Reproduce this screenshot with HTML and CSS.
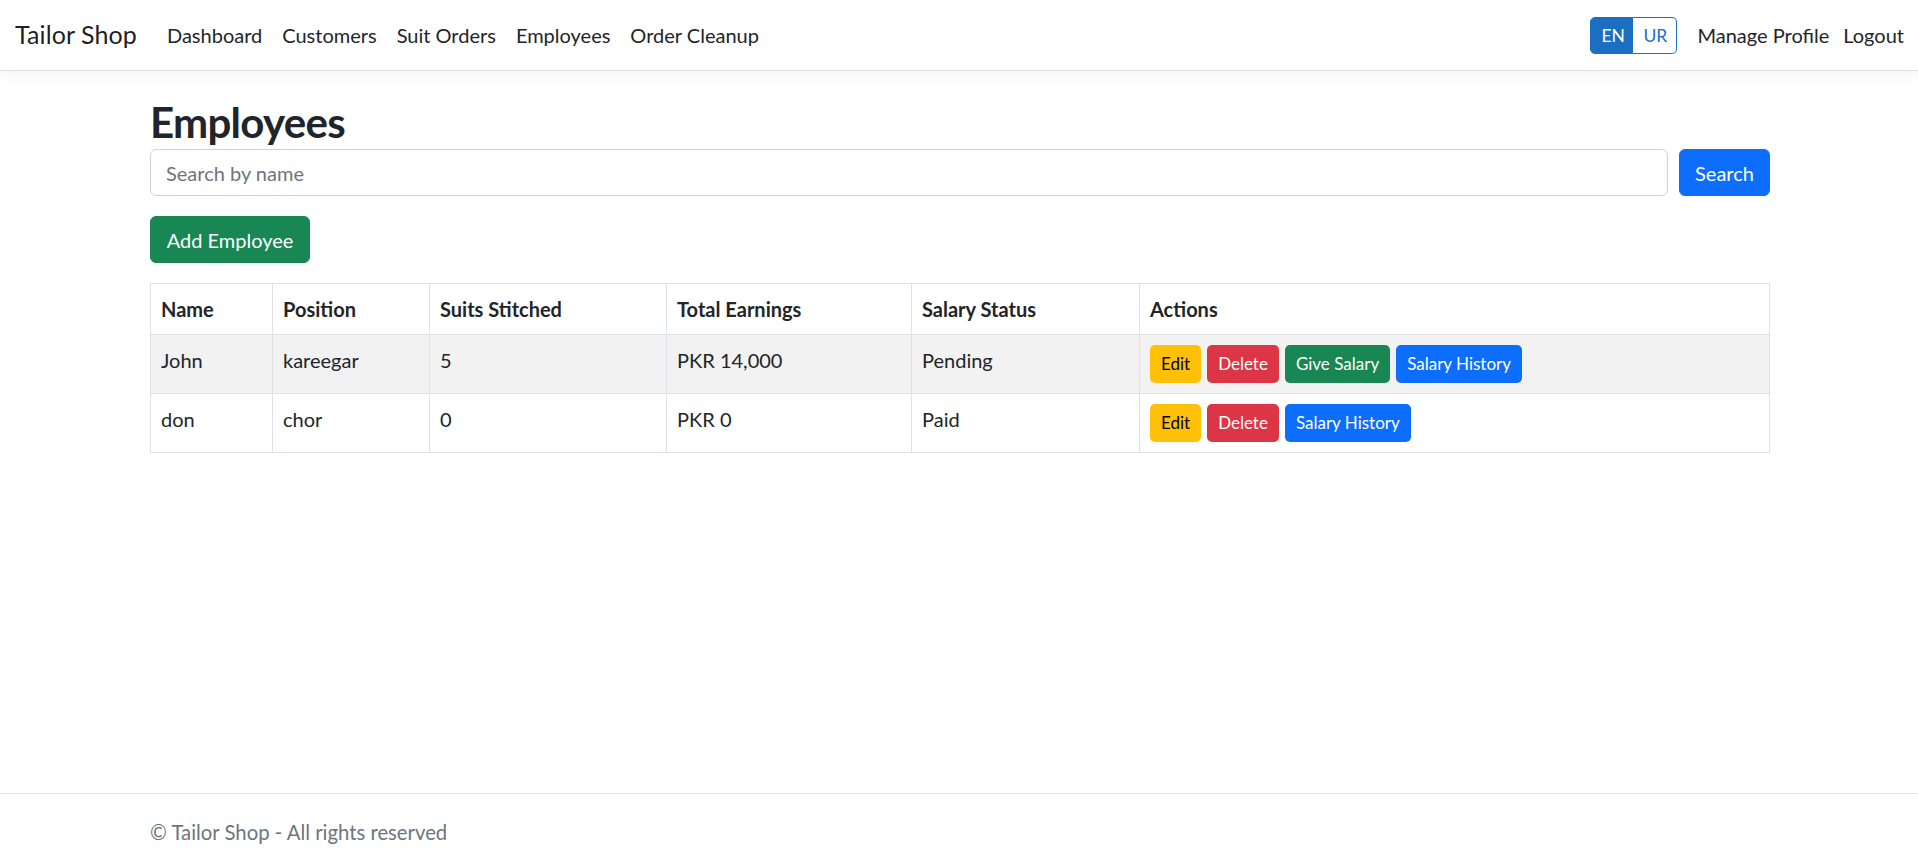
FILE: index.html
```html
<!DOCTYPE html>
<html lang="en">
<head>
<meta charset="utf-8">
<title>Employees - Tailor Shop</title>
<link rel="stylesheet" href="styles.css">
</head>
<body>
<header>
  <nav class="navbar">
    <a class="brand" href="#">Tailor Shop</a>
    <ul class="nav-links">
      <li><a class="nav-link" href="#">Dashboard</a></li>
      <li><a class="nav-link" href="#">Customers</a></li>
      <li><a class="nav-link" href="#">Suit Orders</a></li>
      <li><a class="nav-link" href="#">Employees</a></li>
      <li><a class="nav-link" href="#">Order Cleanup</a></li>
    </ul>
    <div class="nav-right">
      <div class="lang-group">
        <button class="lang lang-active" type="button">EN</button>
        <button class="lang lang-outline" type="button">UR</button>
      </div>
      <a class="nav-link manage" href="#">Manage Profile</a>
      <a class="nav-link logout" href="#">Logout</a>
    </div>
  </nav>
</header>

<main class="container">
  <h1 class="page-title">Employees</h1>
  <form class="search-form">
    <input class="search-input" type="text" placeholder="Search by name">
    <button class="btn btn-primary btn-search" type="button">Search</button>
  </form>
  <div class="add-row">
    <a class="btn btn-success" href="#">Add Employee</a>
  </div>
  <table class="table">
    <colgroup>
      <col class="c-name"><col class="c-pos"><col class="c-suits"><col class="c-earn"><col class="c-status"><col>
    </colgroup>
    <thead>
      <tr><th>Name</th><th>Position</th><th>Suits Stitched</th><th>Total Earnings</th><th>Salary Status</th><th>Actions</th></tr>
    </thead>
    <tbody>
      <tr class="striped">
        <td>John</td><td>kareegar</td><td>5</td><td>PKR 14,000</td><td>Pending</td>
        <td><div class="actions">
          <a class="btn-sm btn-warning" href="#">Edit</a>
          <a class="btn-sm btn-danger" href="#">Delete</a>
          <a class="btn-sm btn-success" href="#">Give Salary</a>
          <a class="btn-sm btn-primary" href="#">Salary History</a>
        </div></td>
      </tr>
      <tr>
        <td>don</td><td>chor</td><td>0</td><td>PKR 0</td><td>Paid</td>
        <td><div class="actions">
          <a class="btn-sm btn-warning" href="#">Edit</a>
          <a class="btn-sm btn-danger" href="#">Delete</a>
          <a class="btn-sm btn-primary" href="#">Salary History</a>
        </div></td>
      </tr>
    </tbody>
  </table>
</main>

<footer class="footer">
  <div class="container footer-text">&copy; Tailor Shop - All rights reserved</div>
</footer>
</body>
</html>
```
FILE: styles.css
```css
* { box-sizing: border-box; }

html, body { height: 100%; }

body {
  margin: 0;
  min-height: 100vh;
  display: flex;
  flex-direction: column;
  font-family: Lato, "Liberation Sans", sans-serif;
  font-size: 20px;
  line-height: 30px;
  color: #212529;
  background: #fff;
}

a { text-decoration: none; }

/* Navbar */
.navbar {
  display: flex;
  align-items: center;
  padding: 10px 14px 10px 15px;
  border-bottom: 1px solid #dee2e6;
  box-shadow: 0 5px 15px rgba(0, 0, 0, 0.05);
  background: #fff;
  position: relative;
  z-index: 1;
}

.brand {
  font-size: 25px;
  line-height: 37.5px;
  padding: 6.25px 0;
  margin-right: 20px;
  color: rgba(0, 0, 0, 0.9);
  white-space: nowrap;
  letter-spacing: 0.1px;
}

.nav-links {
  display: flex;
  list-style: none;
  margin: 0;
  padding: 0;
}

.nav-link {
  display: block;
  padding: 10px;
  font-size: 20px;
  line-height: 30px;
  color: #212529;
  white-space: nowrap;
}

.nav-right {
  margin-left: auto;
  display: flex;
  align-items: center;
}

.lang-group {
  display: flex;
  margin-right: 10px;
}

.lang {
  font-family: inherit;
  font-size: 17.5px;
  line-height: 25px;
  padding: 5px 10px;
  border: 1px solid #1b6ec2;
  margin: 0;
  cursor: pointer;
  width: 44px;
}

.lang-active {
  background: #1b6ec2;
  color: #fff;
  border-radius: 5px 0 0 5px;
  width: 43px;
}

.lang-outline {
  background: #fff;
  color: #1b6ec2;
  border-left: 0;
  border-radius: 0 5px 5px 0;
}

.manage { padding: 10px 0 10px 10px; }
.logout { padding: 10px 0 10px 14px; }

/* Main */
.container {
  width: 1620px;
  margin-left: calc((100% - 1620px) / 2 + 1px);
}

main.container {
  padding-top: 26px;
  padding-bottom: 20px;
}

.page-title {
  font-size: 42px;
  line-height: 50px;
  font-weight: 700;
  letter-spacing: -0.7px;
  margin: 0 0 2px;
  color: #212529;
}

.search-form {
  display: flex;
  margin: 0 0 20px;
}

.search-input {
  flex: 1;
  height: 47px;
  margin-right: 11px;
  padding: 7.5px 15px;
  font-family: inherit;
  font-size: 20px;
  line-height: 30px;
  color: #212529;
  border: 1px solid #ced4da;
  border-radius: 6px;
  outline: none;
}

.search-input::placeholder { color: #6c757d; }

.btn {
  display: inline-block;
  height: 47px;
  padding: 7.5px 15px;
  font-family: inherit;
  font-size: 20px;
  line-height: 30px;
  border: 1px solid transparent;
  border-radius: 6px;
  cursor: pointer;
  text-align: center;
}

.btn-search { width: 91px; }

.add-row { margin-bottom: 20px; }
.add-row .btn { width: 160px; }

.btn-primary { background: #0d6efd; border-color: #0d6efd; color: #fff; }
.btn-success { background: #198754; border-color: #198754; color: #fff; }
.btn-danger { background: #dc3545; border-color: #dc3545; color: #fff; }
.btn-warning { background: #ffc107; border-color: #ffc107; color: #000; }

/* Table */
.table {
  width: 100%;
  border-collapse: collapse;
  table-layout: fixed;
  border: 1px solid #dee2e6;
  color: #212529;
}

.c-name { width: 122px; }
.c-pos { width: 157px; }
.c-suits { width: 237px; }
.c-earn { width: 245px; }
.c-status { width: 228px; }

.table th, .table td {
  border: 1px solid #dee2e6;
  padding: 10px;
  text-align: left;
  vertical-align: top;
  font-size: 20px;
  line-height: 30px;
}

.table th { font-weight: 700; }

.table tr.striped td { background: #f2f2f2; }

.actions {
  display: flex;
  gap: 6px;
}

.btn-sm {
  display: inline-block;
  height: 38px;
  padding: 5px 10px;
  font-size: 17px;
  line-height: 26px;
  border: 1px solid transparent;
  border-radius: 5px;
  white-space: nowrap;
}

/* Footer */
.footer {
  margin-top: auto;
  border-top: 1px solid #dee2e6;
  color: #6c757d;
  line-height: 69px;
  padding-top: 4px;
  white-space: nowrap;
}

.footer-text { font-size: 20.3px; }
```
